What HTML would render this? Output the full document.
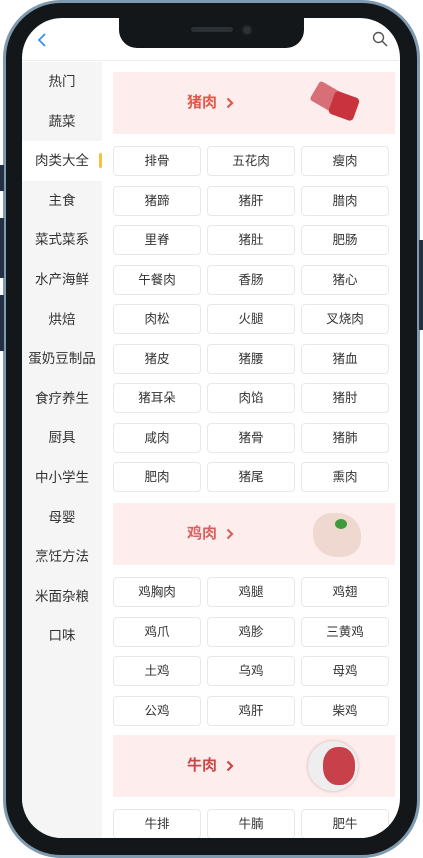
<!DOCTYPE html>
<html><head><meta charset="utf-8">
<style>
*{margin:0;padding:0;box-sizing:border-box}
body{width:423px;height:858px;background:#fff;position:relative;overflow:hidden;font-family:"Liberation Sans","Noto Sans CJK SC",sans-serif}
.outer{position:absolute;left:3px;top:0;width:417px;height:858px;border-radius:58px;background:#7e9ab0}
.bezel{position:absolute;left:6px;top:3px;width:411px;height:852px;border-radius:55px;background:#131719}
.side{position:absolute;background:#223242;width:4px}
.screen{position:absolute;left:22px;top:18px;width:378px;height:820px;border-radius:40px;background:#fff;overflow:hidden}
.notch{position:absolute;left:97px;top:0;width:185px;height:30px;background:#131719;border-radius:0 0 18px 18px}
.spk{position:absolute;left:72px;top:9px;width:42px;height:5px;border-radius:3px;background:#2b3035}
.cam{position:absolute;left:122px;top:6px;width:12px;height:12px;border-radius:50%;background:#2b3035;border:2px solid #1a1d20}
.hdr{position:absolute;left:0;top:0;width:378px;height:43px;border-bottom:1px solid #eee}
.nav{position:absolute;left:0;top:44px;width:80px;height:800px;background:#f5f5f5}
.nav div{height:39.6px;line-height:39.6px;text-align:center;font-size:13.5px;color:#333;position:relative}
.nav .act{background:#fff}
.nav .act:after{content:"";position:absolute;right:0;top:12px;width:3px;height:15px;background:#f8c23a;border-radius:2px}
.ban{position:absolute;left:91px;width:282px;height:62px;background:#fdeeed}
.ban span{position:absolute;left:74px;top:0;line-height:62px;font-size:15px;font-weight:bold;color:#e0594a}
.ban svg.ch{position:absolute;left:113px;top:25px}
.btn{position:absolute;width:88px;height:30px;border:1px solid #e8e8e8;border-radius:4px;text-align:center;line-height:28px;font-size:12.5px;color:#333;background:#fff}
</style></head><body>
<div class="outer"></div><div class="bezel"></div>
<div class="side" style="left:0;top:165px;height:26px"></div>
<div class="side" style="left:0;top:218px;height:60px"></div>
<div class="side" style="left:0;top:295px;height:56px"></div>
<div class="side" style="left:419px;top:240px;height:90px"></div>
<div class="screen">
<div class="hdr">
<svg style="position:absolute;left:14px;top:15px" width="12" height="14"><path d="M9 1L3 7l6 6" fill="none" stroke="#3b8ef0" stroke-width="1.8"/></svg>
<svg style="position:absolute;left:350px;top:13px" width="16" height="16"><circle cx="6.5" cy="6.5" r="5" fill="none" stroke="#555" stroke-width="1.4"/><path d="M10 10l5 5" stroke="#555" stroke-width="1.5"/></svg>
</div>
<div class="notch"><div class="spk"></div><div class="cam"></div></div>
<div class="nav">
<div>热门</div><div>蔬菜</div><div class="act">肉类大全</div><div>主食</div><div>菜式菜系</div><div>水产海鲜</div><div>烘焙</div><div>蛋奶豆制品</div><div>食疗养生</div><div>厨具</div><div>中小学生</div><div>母婴</div><div>烹饪方法</div><div>米面杂粮</div><div>口味</div>
</div>
<div class="ban" style="top:54px"><span>猪肉</span><svg class="ch" width="8" height="12"><path d="M1.5 1.5l4.5 4.5-4.5 4.5" fill="none" stroke="#e0594a" stroke-width="2.2"/></svg>
<div style="position:absolute;left:200px;top:14px;width:28px;height:22px;background:#d86f76;transform:rotate(30deg);border-radius:3px"></div>
<div style="position:absolute;left:218px;top:22px;width:26px;height:24px;background:#c8333e;transform:rotate(20deg);border-radius:4px"></div></div>
<div class="ban" style="top:485px"><span style="color:#d96060">鸡肉</span><svg class="ch" width="8" height="12"><path d="M1.5 1.5l4.5 4.5-4.5 4.5" fill="none" stroke="#d96060" stroke-width="2.2"/></svg>
<div style="position:absolute;left:200px;top:10px;width:48px;height:44px;background:#efd8cf;border-radius:40% 50% 40% 50%"></div>
<div style="position:absolute;left:222px;top:16px;width:12px;height:10px;background:#3e9a3a;border-radius:50%"></div></div>
<div class="ban" style="top:717px"><span style="color:#c84848">牛肉</span><svg class="ch" width="8" height="12"><path d="M1.5 1.5l4.5 4.5-4.5 4.5" fill="none" stroke="#c84848" stroke-width="2.2"/></svg>
<div style="position:absolute;left:195px;top:6px;width:50px;height:50px;border-radius:50%;background:#eee;box-shadow:0 0 3px #caa"></div>
<div style="position:absolute;left:210px;top:12px;width:32px;height:38px;border-radius:45%;background:#c8404a"></div></div>
<div id="g"></div>
</div>
<script>
var rows=[["排骨","五花肉","瘦肉"],["猪蹄","猪肝","腊肉"],["里脊","猪肚","肥肠"],["午餐肉","香肠","猪心"],["肉松","火腿","叉烧肉"],["猪皮","猪腰","猪血"],["猪耳朵","肉馅","猪肘"],["咸肉","猪骨","猪肺"],["肥肉","猪尾","熏肉"],
null,["鸡胸肉","鸡腿","鸡翅"],["鸡爪","鸡胗","三黄鸡"],["土鸡","乌鸡","母鸡"],["公鸡","鸡肝","柴鸡"],null,["牛排","牛腩","肥牛"]];
var tops=[128,167.5,207,246.5,286,325.5,365,404.5,444,0,559,598.5,638,677.5,0,791];
var h="";var xs=[91,185,279];
rows.forEach(function(r,i){if(!r)return;r.forEach(function(t,j){h+='<div class="btn" style="left:'+xs[j]+'px;top:'+tops[i]+'px">'+t+'</div>';});});
document.getElementById("g").innerHTML=h;
</script>
</body></html>
